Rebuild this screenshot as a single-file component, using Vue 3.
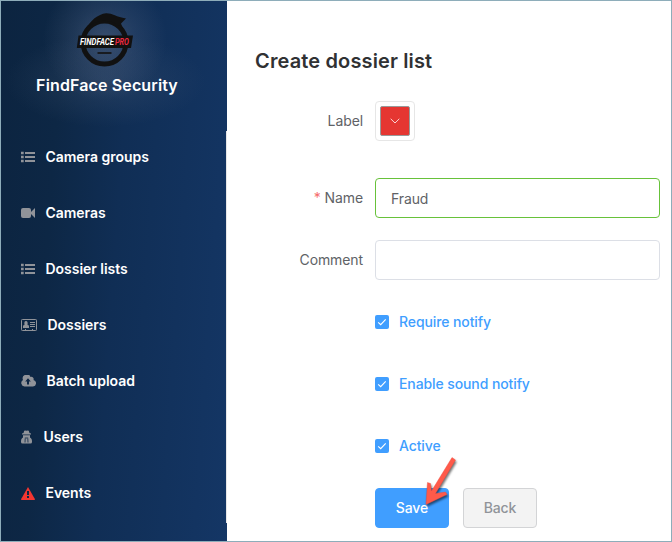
<script setup>
import { ref } from 'vue'

const menu = [
  { text: 'Camera groups', icon: 'list' },
  { text: 'Cameras', icon: 'video' },
  { text: 'Dossier lists', icon: 'list' },
  { text: 'Dossiers', icon: 'card' },
  { text: 'Batch upload', icon: 'cloud' },
  { text: 'Users', icon: 'user' },
  { text: 'Events', icon: 'warning' },
]
const checks = ['Require notify', 'Enable sound notify', 'Active']
const name = ref('Fraud')
const comment = ref('')
</script>

<template>
  <div class="page">
    <aside class="sidebar">
      <header class="brand">
        <svg class="logo" width="58" height="56" viewBox="0 0 58 56">
          <circle cx="28.500" cy="29.500" r="21.500" fill="none" stroke="#111" stroke-width="5" />
          <path d="M10 16 C14 8 22 1 30 .3 C36 0 40 4 50 5.500 L45 10.500 L47 16 C36 5 20 5 10 16Z" fill="#111" />
          <path d="M2.500 22.500H57L55 35H.8Z" fill="#111" />
          <text x="4" y="31.800" class="logo-text" textLength="34" lengthAdjust="spacingAndGlyphs">FINDFACE</text>
          <text x="39" y="31.800" class="logo-text pro" textLength="14" lengthAdjust="spacingAndGlyphs">PRO</text>
          <path d="M21.500 40h14" stroke="#181b20" stroke-width="2" />
        </svg>
        <div class="brand-name">FindFace Security</div>
      </header>
      <nav class="menu">
        <a v-for="item in menu" :key="item.text" class="item">
          <svg v-if="item.icon === 'list'" class="icon" width="14" height="12" viewBox="0 0 14 12">
            <path d="M4 2h10M4 6h10M4 10h10" stroke="currentColor" stroke-width="2" />
            <path d="M0 .7h2.700v2.600H0zM0 4.700h2.700v2.600H0zM0 8.700h2.700v2.600H0z" fill="currentColor" />
          </svg>
          <svg v-else-if="item.icon === 'video'" class="icon" width="14" height="10" viewBox="0 0 14 10">
            <rect width="10" height="10" rx="2" fill="currentColor" />
            <path d="M9.500 4.500 14 0v10L9.500 5.500Z" fill="currentColor" />
          </svg>
          <svg v-else-if="item.icon === 'card'" class="icon" width="16" height="12" viewBox="0 0 16 12">
            <rect x=".5" y=".5" width="15" height="11" rx=".8" fill="none" stroke="currentColor" />
            <path d="M2 9V7.200Q2 6 3.500 6 2.800 2 5 2T6.500 6Q8 6 8 7.200V9Z" fill="currentColor" />
            <path d="M9 3.500h5M9 5.500h5M9 7.500h5M4.500 10v1M11.500 10v1" stroke="currentColor" />
          </svg>
          <svg v-else-if="item.icon === 'cloud'" class="icon" width="15" height="12" viewBox="0 0 15 12">
            <path d="M3.500 11.500a3.500 3.500 0 0 1-1.500-6.500A4 4 0 0 1 9.500 2 2.300 2.300 0 0 1 12.500 5a3.300 3.300 0 0 1-.5 6.500Z" fill="currentColor" />
            <path d="M7 9.500V4.500" stroke="#0d2645" stroke-width="2" />
            <path d="M4.200 6.500 7 3.200 9.800 6.500Z" fill="#0d2645" />
          </svg>
          <svg v-else-if="item.icon === 'user'" class="icon user" width="11" height="14" viewBox="0 0 11 14">
            <path d="M2.500 3 3.200.7Q4.200.2 5.500.8 6.800.2 7.800.7L8.500 3l1.500.5v1H1v-1Z" fill="currentColor" />
            <path d="M2 5.200h7v2.300l1 .8q1 1 1 2.700v1q0 1.500-1.500 1.500h-8Q0 13.500 0 12v-1q0-1.700 1-2.700l1-.8Z" fill="currentColor" />
            <path d="M4.200 8.500 4 12.500M6.800 8.500l.2 4M3.800 8h3.400" stroke="#0d2645" stroke-width=".8" />
          </svg>
          <svg v-else class="icon warning" width="14" height="13" viewBox="0 0 14 13">
            <path d="M7 0 14 12.200q0 .8-.8.8H.8Q0 13 0 12.200Z" fill="currentColor" />
            <path d="M7 4v4M7 9v2" stroke="#0d2645" stroke-width="2" />
          </svg>
          <span class="item-text">{{ item.text }}</span>
        </a>
      </nav>
    </aside>

    <main class="content">
      <h1>Create dossier list</h1>
      <form class="form" @submit.prevent>
        <div class="row label-row">
          <label>Label</label>
          <div class="picker">
            <div class="swatch">
              <svg width="10" height="6" viewBox="0 0 10 6"><path d="M.7.8 5 5 9.300.8" fill="none" stroke="#fff" stroke-width=".8" /></svg>
            </div>
          </div>
        </div>
        <div class="row">
          <label><span class="star">*</span> Name</label>
          <input v-model="name" class="valid" type="text" />
        </div>
        <div class="row">
          <label>Comment</label>
          <input v-model="comment" type="text" />
        </div>
        <div v-for="check in checks" :key="check" class="row">
          <span></span>
          <div class="check">
            <span class="box">
              <svg width="14" height="14" viewBox="0 0 14 14"><path d="M3.200 7.300 5.700 9.700 10.700 4.400" fill="none" stroke="#fff" stroke-width="1.150" /></svg>
            </span>
            <span class="check-text">{{ check }}</span>
          </div>
        </div>
        <div class="row">
          <span></span>
          <div class="actions">
            <button class="primary">Save</button>
            <button class="back">Back</button>
            <svg class="pointer" width="44" height="56" viewBox="0 0 44 56">
              <path d="M35 3.500 38.500 6 18.500 39.500 28.500 38 30 40.500 9 50.500 10.500 28.500 13.500 29.500 14.500 37Z" fill="#ff5a4a" stroke="#f2463a" stroke-width=".4" />
            </svg>
          </div>
        </div>
      </form>
    </main>
  </div>
</template>

<style>
body { background: #fff; }
</style>

<style scoped>
* { box-sizing: border-box; }
.page {
  display: flex;
  width: 672px;
  height: 542px;
  border: 1px solid #8eadba;
  overflow: hidden;
  font-family: Inter, "Liberation Sans", sans-serif;
  font-size: 14px;
  color: #606266;
  background: #fff;
}
.sidebar {
  width: 226px;
  flex: none;
  background:
    radial-gradient(circle 62px at 104px 38px, rgba(120, 130, 155, .38), rgba(100, 115, 145, .2) 50%, transparent),
    radial-gradient(ellipse 100px 46px at 104px 80px, rgba(90, 108, 135, .26), transparent),
    linear-gradient(94deg, #0c2440 0%, #0d2745 24%, #102e55 50%, #143665 100%);
}
.brand {
  height: 130px;
  padding: 12px 14px 0 0;
  display: flex;
  flex-direction: column;
  align-items: center;
}
.logo { display: block; flex: none; margin-right: 4px; }
.logo-text { fill: #fff; font: italic 700 8.500px Roboto, sans-serif; }
.logo-text.pro { fill: #ee2940; }
.brand-name {
  margin-top: 5px;
  line-height: 22px;
  font-size: 16px;
  font-weight: 600;
  letter-spacing: .13px;
  color: #fff;
  white-space: nowrap;
}
.menu { height: 392px; border-right: 1px solid #e6e6e6; }
.item {
  display: flex;
  align-items: center;
  gap: 10px;
  height: 56px;
  padding: 0 0 4px 20px;
  color: #fff;
  font-weight: 600;
  letter-spacing: -.03px;
}
.item-text { padding: 0 0 2px .500px; }
.icon { flex: none; color: #909399; }
.icon.user { margin-right: 1px; }
.icon.warning { color: #f33631; }
.content { flex: 1; padding: 46px 11px 0 28px; }
h1 {
  margin: 0 0 26px;
  font-size: 20px;
  line-height: 28px;
  font-weight: 600;
  letter-spacing: .14px;
  color: #303133;
}
.form { display: grid; gap: 22px; }
.row { display: grid; grid-template-columns: 108px 285px; column-gap: 12px; height: 40px; }
.label-row { height: 55px; }
label { text-align: right; line-height: 40px; white-space: nowrap; letter-spacing: -.1px; }
.star { color: #f56c6c; }
input {
  width: 100%;
  height: 40px;
  padding: 1px 15px 0;
  border: 1px solid #dcdfe6;
  border-radius: 4px;
  outline: none;
  background: #fff;
  font: inherit;
  letter-spacing: -.1px;
  color: #606266;
}
input.valid { border-color: #67c23a; }
.picker {
  width: 40px;
  height: 40px;
  padding: 4px;
  border: 1px solid #e6e6e6;
  border-radius: 4px;
}
.swatch {
  display: flex;
  align-items: center;
  justify-content: center;
  height: 30px;
  border: 1px solid #999;
  border-radius: 2px;
  background: #e53632;
}
.check { display: flex; align-items: center; gap: 10px; color: #409eff; font-weight: 500; letter-spacing: -.1px; }
.check-text { padding-bottom: 2px; }
.box { width: 14px; height: 14px; border-radius: 2px; background: #409eff; }
.box svg { display: block; }
.actions { display: flex; gap: 14px; position: relative; }
button {
  width: 74px;
  height: 40px;
  padding: 0 0 1px;
  border: 1px solid #409eff;
  border-radius: 4px;
  background: #409eff;
  color: #fff;
  font: 500 14px Inter, sans-serif;
  letter-spacing: -.1px;
}
.back { background: #f3f3f3; border-color: #d3d4d6; color: #909399; }
.pointer { position: absolute; left: 42px; top: -34px; filter: drop-shadow(1px 2px 1px rgba(0, 0, 0, .55)); }
</style>
